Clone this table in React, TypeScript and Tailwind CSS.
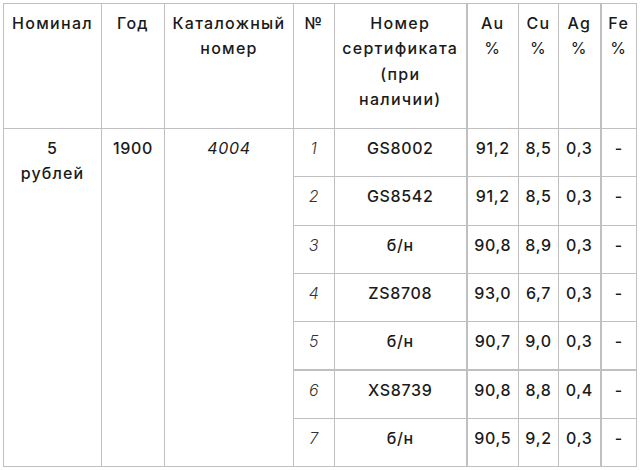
import React from "react";

const rows = [
  { n: "1", cert: "GS8002", au: "91,2", cu: "8,5", ag: "0,3", fe: "-" },
  { n: "2", cert: "GS8542", au: "91,2", cu: "8,5", ag: "0,3", fe: "-" },
  { n: "3", cert: "б/н", au: "90,8", cu: "8,9", ag: "0,3", fe: "-" },
  { n: "4", cert: "ZS8708", au: "93,0", cu: "6,7", ag: "0,3", fe: "-" },
  { n: "5", cert: "б/н", au: "90,7", cu: "9,0", ag: "0,3", fe: "-" },
  { n: "6", cert: "XS8739", au: "90,8", cu: "8,8", ag: "0,4", fe: "-" },
  { n: "7", cert: "б/н", au: "90,5", cu: "9,2", ag: "0,3", fe: "-" },
];

const th = "border border-[#c0c0c0] align-top text-center font-medium px-[1px] pt-[7px] leading-[25.3px] tracking-[0.08em]";
const td = "border border-[#c0c0c0] align-top text-center px-[2px] pt-[7px] leading-[25px] tracking-[0.04em]";

export default function App() {
  return (
    <div
      className="bg-white w-[641px] h-[470px] pt-[3px] pl-[3px] text-[#1a1a1a] text-[16px]"
      style={{ fontFamily: "Inter, 'Noto Sans', sans-serif" }}
    >
      <table className="table-fixed border-collapse w-[633px]">
        <colgroup>
          <col className="w-[98px]" />
          <col className="w-[63px]" />
          <col className="w-[129px]" />
          <col className="w-[41px]" />
          <col className="w-[132px]" />
          <col className="w-[52px]" />
          <col className="w-[40px]" />
          <col className="w-[42px]" />
          <col className="w-[36px]" />
        </colgroup>
        <thead>
          <tr className="h-[125px]">
            <th className={th}>Номинал</th>
            <th className={th}>Год</th>
            <th className={th}>
              Каталожный
              <br />
              номер
            </th>
            <th className={th}>№</th>
            <th className={th}>
              Номер
              <br />
              сертификата
              <br />
              (при
              <br />
              наличии)
            </th>
            <th className={th + " border-l-2"}>
              Au
              <br />
              <span className="font-normal">%</span>
            </th>
            <th className={th}>
              Cu
              <br />
              <span className="font-normal">%</span>
            </th>
            <th className={th}>
              Ag
              <br />
              <span className="font-normal">%</span>
            </th>
            <th className={th + " border-l-2"}>
              Fe
              <br />
              <span className="font-normal">%</span>
            </th>
          </tr>
        </thead>
        <tbody>
          {rows.map((r, i) => {
            const t = i === 5 ? " border-t-2" : "";
            return (
              <tr key={r.n} className="h-[48.3px]">
                {i === 0 && (
                  <>
                    <td rowSpan={7} className={td + " font-medium tracking-[0.07em]"}>
                      5
                      <br />
                      рублей
                    </td>
                    <td rowSpan={7} className={td + " font-medium"}>
                      1900
                    </td>
                    <td rowSpan={7} className={td + " italic font-normal"}>
                      4004
                    </td>
                  </>
                )}
                <td className={td + " italic font-light text-[#333]" + t}>{r.n}</td>
                <td className={td + " font-medium" + t}>{r.cert}</td>
                <td className={td + " font-medium border-l-2" + t}>{r.au}</td>
                <td className={td + " font-medium" + t}>{r.cu}</td>
                <td className={td + " font-medium" + t}>{r.ag}</td>
                <td className={td + " font-medium border-l-2" + t}>{r.fe}</td>
              </tr>
            );
          })}
        </tbody>
      </table>
    </div>
  );
}
